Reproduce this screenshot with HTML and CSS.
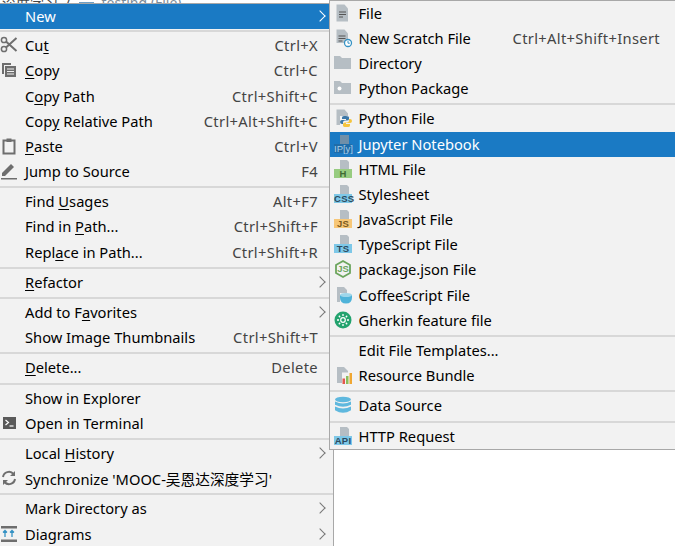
FILE: index.html
```html
<!DOCTYPE html>
<html lang="en">

<head>
    <meta charset="UTF-8">
    <title>Project context menu</title>
    <link rel="stylesheet" href="styles.css">
</head>

<body>
    <div class="crumbs">深度学习 &nbsp;/<span class="crumbIcon"></span><span class="crumbFile">testing (File)</span></div>

    <!-- main context menu -->
    <div class="menu mainMenu">
        <div class="row active"><span class="icon"></span><span class="label">New</span><span class="arrow"></span></div>
        <div class="sep sepFirst"></div>
        <div class="row">
            <span class="icon"><svg viewBox="0 0 18 18"><circle cx="4" cy="4" r="2.600" class="lineIcon"/><circle cx="4" cy="13" r="2.600" class="lineIcon"/><path d="M6 5.500 16.500 15M6 11.500 16.500 2" class="lineIcon thick"/></svg></span>
            <span class="label">Cu<u>t</u></span><span class="keys">Ctrl+X</span>
        </div>
        <div class="row">
            <span class="icon"><svg viewBox="0 0 18 18"><path d="M2 2h9v2H4v9H2z" class="fillIcon"/><path d="M5 5h11v11H5z" class="fillIcon"/><path d="M7 8h7M7 10.500h7M7 13h7" class="knockout"/></svg></span>
            <span class="label"><u>C</u>opy</span><span class="keys">Ctrl+C</span>
        </div>
        <div class="row"><span class="icon"></span><span class="label">C<u>o</u>py Path</span><span class="keys">Ctrl+Shift+C</span></div>
        <div class="row"><span class="icon"></span><span class="label">Cop<u>y</u> Relative Path</span><span class="keys">Ctrl+Alt+Shift+C</span></div>
        <div class="row">
            <span class="icon"><svg viewBox="0 0 18 18"><path d="M3.500 3.500h11v13h-11z" class="lineIcon thick"/><path d="M6.500 1.500h5v3.500h-5z" class="fillIcon"/></svg></span>
            <span class="label"><u>P</u>aste</span><span class="keys">Ctrl+V</span>
        </div>
        <div class="row">
            <span class="icon"><svg viewBox="0 0 18 18"><path d="M1 16h16v1.500H1z" class="fillIcon"/><path d="M2 14v-3L11 2l3 3-9 9z" class="fillIcon"/></svg></span>
            <span class="label">Jump to Source</span><span class="keys">F4</span>
        </div>
        <div class="sep"></div>
        <div class="row"><span class="icon"></span><span class="label">Find <u>U</u>sages</span><span class="keys">Alt+F7</span></div>
        <div class="row"><span class="icon"></span><span class="label">Find in <u>P</u>ath...</span><span class="keys">Ctrl+Shift+F</span></div>
        <div class="row"><span class="icon"></span><span class="label">Repl<u>a</u>ce in Path...</span><span class="keys">Ctrl+Shift+R</span></div>
        <div class="sep"></div>
        <div class="row"><span class="icon"></span><span class="label"><u>R</u>efactor</span><span class="arrow"></span></div>
        <div class="sep"></div>
        <div class="row"><span class="icon"></span><span class="label">Add to F<u>a</u>vorites</span><span class="arrow"></span></div>
        <div class="row"><span class="icon"></span><span class="label">Show Image Thumbnails</span><span class="keys">Ctrl+Shift+T</span></div>
        <div class="sep"></div>
        <div class="row"><span class="icon"></span><span class="label"><u>D</u>elete...</span><span class="keys">Delete</span></div>
        <div class="sep"></div>
        <div class="row"><span class="icon"></span><span class="label">Show in Explorer</span></div>
        <div class="row">
            <span class="icon"><svg viewBox="0 0 18 18"><path d="M3 3h13v12H3z" class="darkIcon"/><path d="m5.500 6 3 2.500-3 2.500" class="lightStroke"/><path d="M9.500 12h4" class="lightStroke"/></svg></span>
            <span class="label">Open in Terminal</span>
        </div>
        <div class="sep"></div>
        <div class="row"><span class="icon"></span><span class="label">Local <u>H</u>istory</span><span class="arrow"></span></div>
        <div class="row">
            <span class="icon"><svg viewBox="0 0 18 18"><path d="M3 8a6 6 0 0 1 10.500-3M15 10a6 6 0 0 1-10.500 3" class="lineIcon thick"/><path d="M15 2v5h-5zM3 16v-5h5z" class="fillIcon"/></svg></span>
            <span class="label">Synchronize 'MOOC-吴恩达深度学习'</span>
        </div>
        <div class="sep"></div>
        <div class="row"><span class="icon"></span><span class="label">Mark Directory as</span><span class="arrow"></span></div>
        <div class="row">
            <span class="icon"><svg viewBox="0 0 18 18"><path d="M1 1h16v2.500H1zM1 14.500h16V17H1z" class="fillIcon"/><path d="M5 12V6M3 7.500 5 5.500l2 2M12 12V6M10 7.500l2-2 2 2" class="blueStroke"/></svg></span>
            <span class="label">Diagrams</span><span class="arrow"></span>
        </div>
    </div>

    <!-- New submenu, opened over the main menu -->
    <div class="menu subMenu">
        <div class="row">
            <span class="icon"><svg viewBox="0 0 18 18"><path d="M2.500 .5h8l3.500 4v13H2.500z" class="fileIcon"/><path d="M5 8h7M5 10.500h7M5 13h4" class="darkLine"/></svg></span>
            <span class="label">File</span>
        </div>
        <div class="row">
            <span class="icon"><svg viewBox="0 0 18 18"><path d="M2.500 .5h8l3.500 4V14H2.500z" class="fileIcon"/><path d="M4.500 7h7M4.500 9.500h7M4.500 12h4" class="darkLine"/><circle cx="14" cy="14" r="3.500" fill="#fff" stroke="#3592c4" stroke-width="1.300"/><path d="M14 12v2.200h1.800" class="blueThin"/></svg></span>
            <span class="label">New Scratch File</span><span class="keys">Ctrl+Alt+Shift+Insert</span>
        </div>
        <div class="row">
            <span class="icon"><svg viewBox="0 0 18 18"><path d="M0 2h6l2 2h9v11H0z" class="fileIcon"/></svg></span>
            <span class="label">Directory</span>
        </div>
        <div class="row">
            <span class="icon"><svg viewBox="0 0 18 18"><path d="M0 2h6l2 2h9v11H0z" class="fileIcon"/><circle cx="5.500" cy="9.500" r="2" fill="#fff"/></svg></span>
            <span class="label">Python Package</span>
        </div>
        <div class="sep"></div>
        <div class="row">
            <span class="icon"><svg viewBox="0 0 18 18"><path d="M2.500 .5h8l3.500 4V7H6v9H2.500z" class="fileIcon"/><path d="M12 7h-2q-2 0-2 1.500V10h4v1H8q-2 0-2 2t2 2h1v-1.500q0-2 2-2h2q2 0 2-1.500V8.500Q15 7 12 7z" fill="#3c78a8"/><path d="M12 18h2q2 0 2-1.500V15h-4v-1h4q2 0 2-2t-2-2h-1v1.500q0 2-2 2h-2q-2 0-2 1.500v1.500Q9 18 12 18z" fill="#f5c53d"/></svg></span>
            <span class="label">Python File</span>
        </div>
        <div class="row active">
            <span class="icon"><svg viewBox="0 0 18 18"><path d="M6 0h9v9H6z" fill="#6f8fa8"/></svg><span class="badge badgeActive">IP[y]</span></span>
            <span class="label">Jupyter Notebook</span>
        </div>
        <div class="row">
            <span class="icon"><svg viewBox="0 0 18 18"><path d="M6 0h7l2 2v7H6z" class="fileIcon"/></svg><span class="badge badgeHtml">H</span></span>
            <span class="label">HTML File</span>
        </div>
        <div class="row">
            <span class="icon"><svg viewBox="0 0 18 18"><path d="M6 0h7l2 2v7H6z" class="fileIcon"/></svg><span class="badge badgeCss">CSS</span></span>
            <span class="label">Stylesheet</span>
        </div>
        <div class="row">
            <span class="icon"><svg viewBox="0 0 18 18"><path d="M6 0h7l2 2v7H6z" class="fileIcon"/></svg><span class="badge badgeJs">JS</span></span>
            <span class="label">JavaScript File</span>
        </div>
        <div class="row">
            <span class="icon"><svg viewBox="0 0 18 18"><path d="M6 0h7l2 2v7H6z" class="fileIcon"/></svg><span class="badge badgeTs">TS</span></span>
            <span class="label">TypeScript File</span>
        </div>
        <div class="row">
            <span class="icon"><svg viewBox="0 0 18 18"><path d="M9 1 16 5v8l-7 4-7-4V5z" fill="none" stroke="#6ca55e" stroke-width="1.800"/></svg><span class="nodeText">JS</span></span>
            <span class="label">package.json File</span>
        </div>
        <div class="row">
            <span class="icon"><svg viewBox="0 0 18 18"><path d="M3 1h7l3 3v3H6v9H3z" class="fileIcon"/><path d="M6 9h12v2.500q0 6-6 6t-6-6z" fill="#4fb3d9"/><ellipse cx="12" cy="9" rx="6" ry="2" fill="#9ed6ea"/></svg></span>
            <span class="label">CoffeeScript File</span>
        </div>
        <div class="row">
            <span class="icon"><svg viewBox="0 0 18 18"><circle cx="9" cy="9" r="8.500" fill="#23a36e"/><circle cx="9" cy="9" r="2.300" fill="none" stroke="#fff" stroke-width="1.200"/><path d="M9 3v2M9 13v2M3 9h2M13 9h2M4.800 4.800l1.400 1.400M11.800 11.800l1.400 1.400M13.200 4.800l-1.400 1.400M6.200 11.800l-1.400 1.400" stroke="#fff" stroke-width="1.300"/></svg></span>
            <span class="label">Gherkin feature file</span>
        </div>
        <div class="sep"></div>
        <div class="row"><span class="icon"></span><span class="label">Edit File Templates...</span></div>
        <div class="row">
            <span class="icon"><svg viewBox="0 0 18 18"><path d="M3 1h7l4 4v1.500H8V17H3z" class="fileIcon"/><path d="M8.500 12.500H11V18H8.500z" fill="#e2574c"/><path d="M12 10h2.500v8H12z" fill="#8bbd5b"/><path d="M15.500 7H18v11h-2.500z" fill="#f0a732"/></svg></span>
            <span class="label">Resource Bundle</span>
        </div>
        <div class="sep"></div>
        <div class="row">
            <span class="icon"><svg viewBox="0 0 18 18"><ellipse cx="9" cy="3.500" rx="8" ry="2.800" fill="#5fb8de"/><path d="M1 5.500q8 4 16 0v3.200q-8 4-16 0zM1 10.500q8 4 16 0v3.700q-8 5-16 0z" fill="#5fb8de"/></svg></span>
            <span class="label">Data Source</span>
        </div>
        <div class="sep"></div>
        <div class="row">
            <span class="icon"><svg viewBox="0 0 18 18"><path d="M6 0h7l2 2v7H6z" class="fileIcon"/></svg><span class="badge badgeCss">API</span></span>
            <span class="label">HTTP Request</span>
        </div>
    </div>
</body>

</html>
```

FILE: styles.css
```css
body {
    margin: 0;
    height: 546px;
    overflow: hidden;
    background-color: #fff;
    color: #000;
    font-family: "Noto Sans", "Noto Sans CJK SC", sans-serif;
    font-size: 14.7px;
    position: relative;
}

/* breadcrumb peeking out above the menu */
.crumbs {
    height: 3px;
    overflow: hidden;
    line-height: 6px;
    font-size: 14px;
    padding-left: 2px;
    color: #444;
    white-space: nowrap;
}

.crumbIcon {
    display: inline-block;
    width: 15px;
    height: 6px;
    margin: 0 8px;
    background-color: #6f9fc4;
}

.crumbFile {
    color: #7d8c99;
}

.menu {
    background-color: #f2f2f2;
    display: flex;
    flex-direction: column;
    box-sizing: border-box;
    border: 1px solid #a8a8a8;
}

.mainMenu {
    width: 334px;
    border-left: none;
}

.subMenu {
    position: absolute;
    top: 0;
    left: 329px;
    width: 346px;
    border-right: none;
}

.row {
    height: 25.2px;
    box-sizing: border-box;
    padding-bottom: 2px;
    flex: none;
    display: flex;
    align-items: center;
    white-space: nowrap;
}

.active {
    background-color: #1a7ac4;
    color: #fff;
}

.icon {
    width: 18px;
    height: 18px;
    flex: none;
    position: relative;
    margin-right: 7px;
}

.mainMenu .row {
    padding-right: 15px;
}

.subMenu .row {
    padding-right: 15px;
    padding-left: 4px;
}

.subMenu .icon {
    margin-right: 6.5px;
}

.icon svg {
    display: block;
    width: 18px;
    height: 18px;
    overflow: visible;
}

.label {
    flex: 1;
}

.label u {
    text-underline-offset: 2px;
}

.keys {
    color: #444;
    letter-spacing: .35px;
}

.arrow {
    width: 7px;
    height: 7px;
    border-top: 1.500px solid #777;
    border-right: 1.500px solid #777;
    transform: rotate(45deg);
    margin-right: -6px;
}

.active .arrow {
    border-color: #fff;
}

.sep {
    flex: none;
    height: 5px;
    display: flex;
    align-items: center;
}

.sepFirst {
    height: 4.4px;
}

.sep::after {
    content: "";
    flex: 1;
    height: 2px;
    background-color: #d8d8d8;
}

.badge {
    position: absolute;
    left: 0;
    right: 0;
    bottom: 0;
    height: 9px;
    line-height: 9px;
    font-family: "Liberation Sans", sans-serif;
    font-size: 9.5px;
    font-weight: bold;
    letter-spacing: .3px;
    text-align: center;
    color: #2c4a5e;
}

.badgeHtml {
    background-color: #97cc80;
    color: #3f6b33;
}

.badgeCss {
    background-color: #7ec8e8;
}

.badgeJs {
    background-color: #f7c778;
    color: #7a5a20;
}

.badgeTs {
    background-color: #7ec8e8;
}

.badgeActive {
    color: #a9cde6;
    font-weight: normal;
    letter-spacing: 0;
    background-color: #1f6ca8;
}

.nodeText {
    position: absolute;
    left: 0;
    right: 0;
    top: 3px;
    line-height: 12px;
    font-family: "Liberation Sans", sans-serif;
    font-size: 9.5px;
    font-weight: bold;
    text-align: center;
    color: #6ca55e;
}

/* svg icon paint */
.fileIcon {
    fill: #b6bec4;
}

.fillIcon {
    fill: #6e6e6e;
}

.lineIcon {
    fill: none;
    stroke: #6e6e6e;
    stroke-width: 1.500;
}

.thick {
    stroke-width: 2;
}

.knockout {
    stroke: #f2f2f2;
    stroke-width: 1;
}

.darkIcon {
    fill: #5a5a5a;
}

.lightStroke {
    fill: none;
    stroke: #fff;
    stroke-width: 1.200;
}

.darkLine {
    stroke: #555;
    stroke-width: 1.200;
}

.blueStroke {
    fill: none;
    stroke: #3592c4;
    stroke-width: 1.300;
}

.blueThin {
    fill: none;
    stroke: #3592c4;
    stroke-width: 1;
}
```
